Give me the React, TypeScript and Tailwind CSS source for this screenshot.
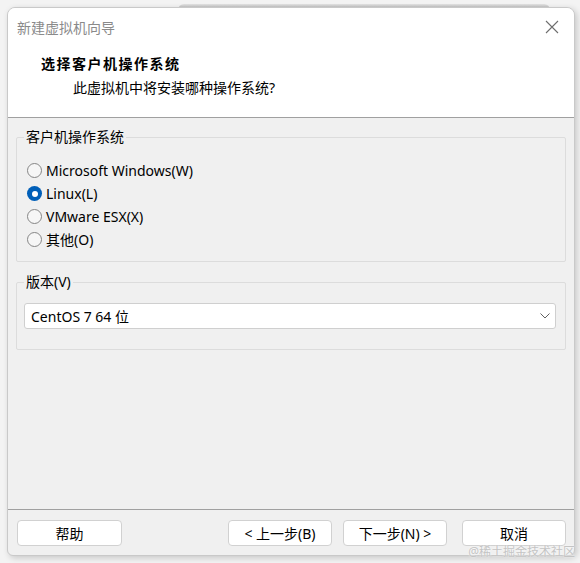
import React from "react";

const font = { fontFamily: '"Noto Sans", "Noto Sans CJK SC", sans-serif' };

function Radio({ checked, label }: { checked?: boolean; label: string }) {
  return (
    <div className="h-[23px] flex items-center">
      {checked ? (
        <span className="w-[15px] h-[15px] rounded-full bg-[#005fb8] flex items-center justify-center ml-[3px]">
          <span className="w-[6px] h-[6px] rounded-full bg-white" />
        </span>
      ) : (
        <span className="w-[15px] h-[15px] rounded-full border border-[#858585] bg-[#f6f6f6] ml-[3px]" />
      )}
      <span className="ml-[4px] text-[14px] leading-[20px] text-black">{label}</span>
    </div>
  );
}

function Btn({ label, w, className = "" }: { label: string; w: string; className?: string }) {
  return (
    <div
      className={`h-[26px] ${w} bg-white border border-[#d1d1d1] rounded-[4px] flex items-center justify-center text-[14px] text-black ${className}`}
    >
      {label}
    </div>
  );
}

export default function App() {
  return (
    <div className="relative w-[580px] h-[563px] bg-[#f3f3f3] pt-[7px] pl-[7px] pr-[5px] pb-[7px] overflow-hidden" style={font}>
      {/* background windows edges */}
      <div className="absolute top-[4px] left-[178px] w-[372px] h-[6px] rounded-t-[6px] bg-gradient-to-b from-[#e4e4e4] to-[#a8a8a8]" />
      <div className="relative h-full flex flex-col rounded-t-[8px] rounded-b-[6px] border border-[#c9c9c9] bg-[#f0f0f0] overflow-hidden shadow-[2px_2px_6px_rgba(0,0,0,0.18)]">
        {/* title + header */}
        <div className="bg-white border-b border-[#a0a0a0]">
          <div className="h-[38px] flex items-center justify-between pl-[9px] pr-[12px]">
            <span className="text-[14px] text-[#8a8a8a]">新建虚拟机向导</span>
            <svg width="14" height="14" viewBox="0 0 14 14" className="mr-[3px]">
              <path d="M1 1 L13 13 M13 1 L1 13" stroke="#6e6e6e" strokeWidth="1.1" fill="none" />
            </svg>
          </div>
          <div className="h-[71px] pl-[33px] pt-[8px]">
            <div className="h-[20px] leading-[20px] text-[14px] font-bold text-black tracking-[1.5px]">选择客户机操作系统</div>
            <div className="mt-[4px] h-[20px] leading-[20px] text-[14px] text-black pl-[32px]">此虚拟机中将安装哪种操作系统?</div>
          </div>
        </div>

        {/* body */}
        <div className="flex-1 flex flex-col px-[8px]">
          <fieldset className="mt-[9px] border border-[#dcdcdc] rounded-[2px] pl-[7px] pt-[12px] pb-[10px]">
            <legend className="px-[2px] text-[14px] leading-[20px] text-black">客户机操作系统</legend>
            <Radio label="Microsoft Windows(W)" />
            <Radio checked label="Linux(L)" />
            <Radio label="VMware ESX(X)" />
            <Radio label="其他(O)" />
          </fieldset>

          <fieldset className="mt-[10px] border border-[#dcdcdc] rounded-[2px] pl-[7px] pr-[9px] pt-[11px] pb-[20px]">
            <legend className="px-[2px] text-[14px] leading-[20px] text-black">版本(V)</legend>
            <div className="h-[26px] bg-white border border-[#cfcfcf] rounded-[3px] flex items-center justify-between pl-[6px] pr-[5px]">
              <span className="text-[14px] text-black">CentOS 7 64 位</span>
              <svg width="10" height="6" viewBox="0 0 10 6">
                <path d="M0.5 0.5 L5 5 L9.5 0.5" stroke="#606060" strokeWidth="1" fill="none" />
              </svg>
            </div>
          </fieldset>
        </div>

        {/* footer */}
        <div className="h-[46px] border-t border-[#a0a0a0] flex items-start pt-[10px] pl-[9px] pr-[8px]">
          <Btn label="帮助" w="w-[105px]" />
          <div className="flex-1" />
          <Btn label="< 上一步(B)" w="w-[104px]" />
          <Btn label="下一步(N) >" w="w-[104px]" className="ml-[11px]" />
          <Btn label="取消" w="w-[104px]" className="ml-[15px]" />
        </div>
      </div>
      <div className="absolute right-[5px] bottom-[4px] text-[12px] leading-[14px] text-[#c4c4c4] [text-shadow:0_0_2px_#fff]" style={font}>
        @稀土掘金技术社区
      </div>
    </div>
  );
}
